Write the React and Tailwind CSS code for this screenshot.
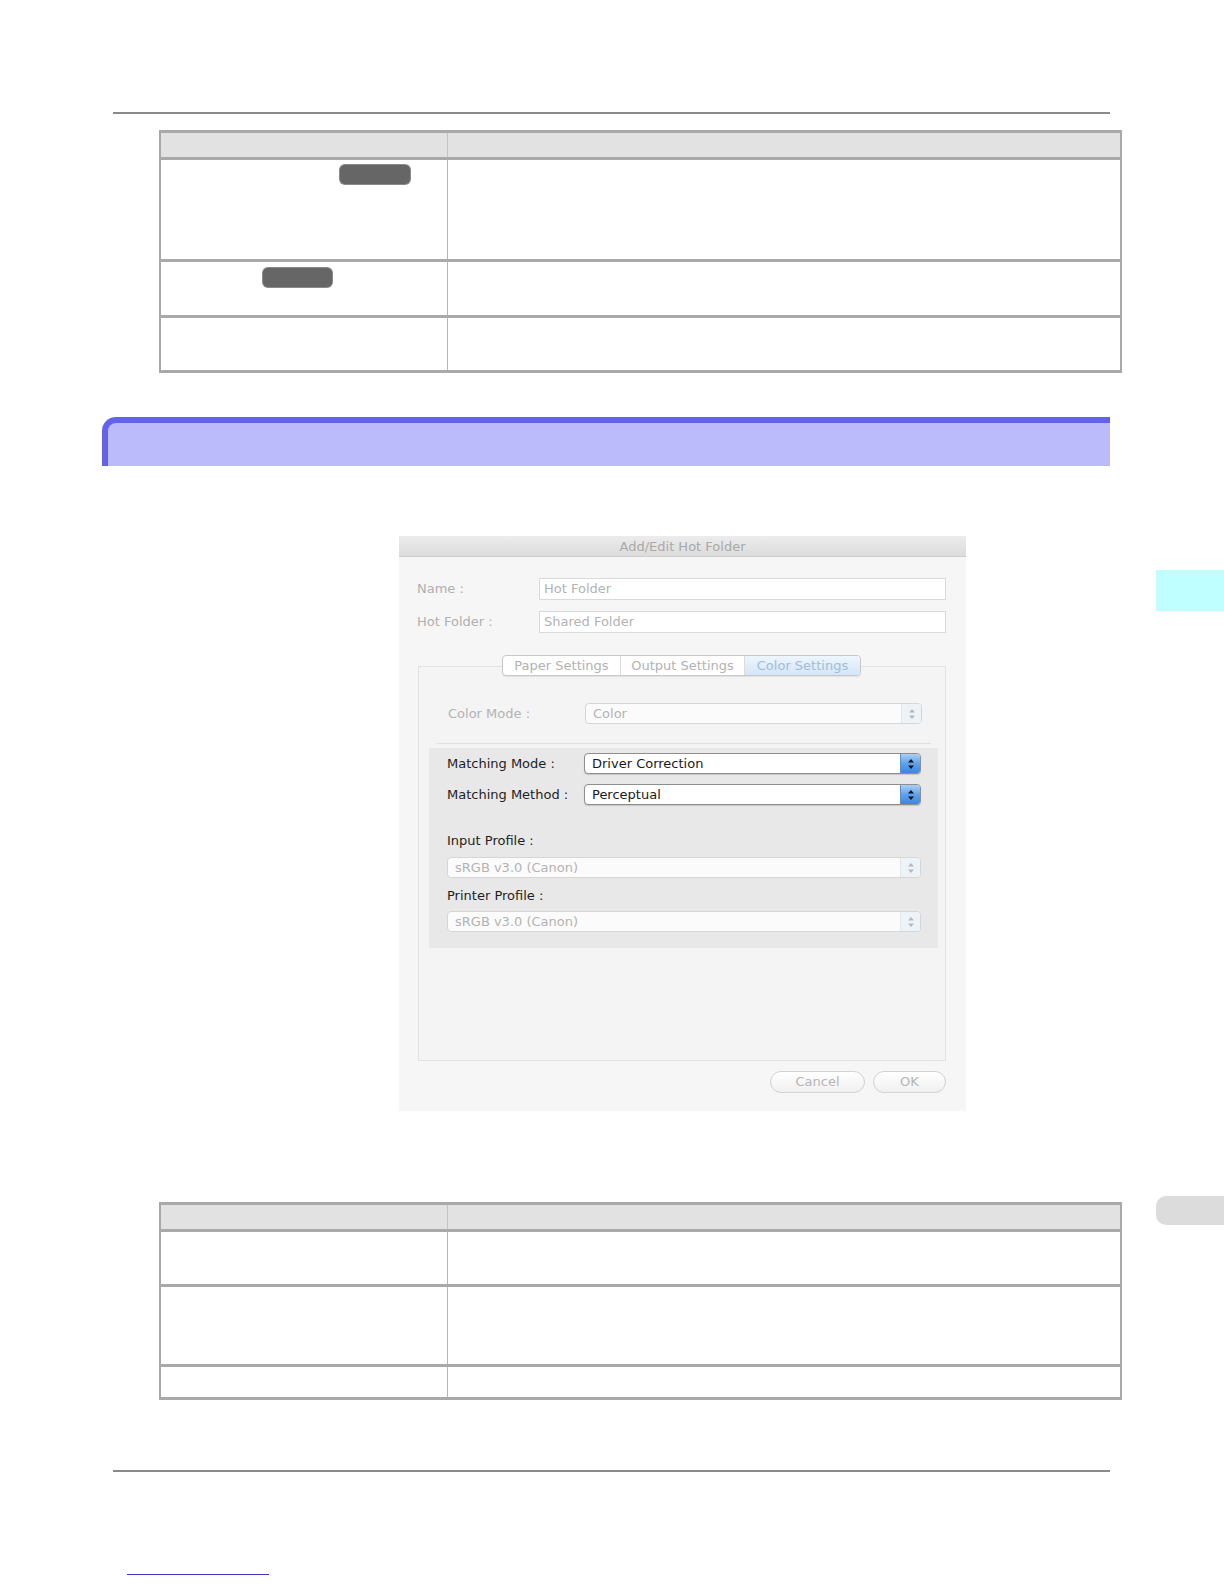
import React from "react";

const Arrows = ({ on }) => (
  <svg width="8" height="12" viewBox="0 0 8 12">
    <path d="M4 1 L7 4.5 L1 4.5 Z" fill={on ? "#111" : "#b4b9c0"} />
    <path d="M4 11 L7 7.5 L1 7.5 Z" fill={on ? "#111" : "#b4b9c0"} />
  </svg>
);

const Popup = ({ value, on, className = "" }) => (
  <div
    className={
      "flex h-[21px] items-stretch rounded-[4px] border " +
      (on ? "border-[#8e8e8e] bg-white shadow-[0_1px_1px_rgba(0,0,0,0.15)]" : "border-[#d6d6d6] bg-[#fbfbfb]") +
      " " +
      className
    }
  >
    <div className={"flex-1 pl-[7px] leading-[19px] " + (on ? "text-[#1a1a1a]" : "text-[#b3b3b3]")}>{value}</div>
    <div
      className={
        "flex w-[20px] items-center justify-center rounded-r-[3px] border-l " +
        (on
          ? "border-[#5b8fd0] bg-gradient-to-b from-[#a9d0f7] via-[#5ea2ec] to-[#3b86e0]"
          : "border-[#dfe6ee] bg-[#eef3f8]")
      }
    >
      <Arrows on={on} />
    </div>
  </div>
);

const Row = ({ h, last, children }) => (
  <div
    className={
      "flex border-t-[3px] border-[#a9a9a9] " + (last ? "border-b-[3px]" : "")
    }
    style={{ height: h }}
  >
    <div className="w-[287px] border-r border-[#b5b5b5]">{children}</div>
    <div className="flex-1" />
  </div>
);

const Header = () => (
  <div className="flex h-[27px] border-t-[3px] border-[#a9a9a9] bg-[#e2e2e2]">
    <div className="w-[287px] border-r border-[#c4c4c4]" />
    <div className="flex-1" />
  </div>
);

const Badge = ({ w, ml, mt }) => (
  <div
    className="h-[19px] rounded-[5px] bg-[#666666] shadow-[0_0_0_1px_#8a8a8a]"
    style={{ width: w, marginLeft: ml, marginTop: mt }}
  />
);

export default function App() {
  return (
    <div className="relative h-[1584px] w-[1224px] overflow-hidden bg-white font-['DejaVu_Sans',sans-serif]">
      <div className="pl-[113px] pt-[112px]">
        <div className="h-[2px] w-[997px] bg-[#8a8a8a]" />

        {/* table 1 */}
        <div className="ml-[46px] mt-[16px] w-[963px] border-x-2 border-[#a9a9a9]">
          <Header />
          <Row h={102}>
            <Badge w={70} ml={179} mt={5} />
          </Row>
          <Row h={56}>
            <Badge w={69} ml={102} mt={6} />
          </Row>
          <Row h={58} last />
        </div>

        {/* section heading */}
        <div className="-ml-[11px] mt-[44px] h-[49px] w-[1008px] rounded-tl-[14px] border-l-[6px] border-t-[6px] border-[#6363e9] bg-[#bbbbfc]" />

        {/* dialog */}
        <div className="ml-[286px] mt-[70px] flex h-[575px] w-[567px] flex-col bg-[#f6f6f6] text-[13px]">
          <div className="h-[21px] border-b border-[#cfcfcf] bg-gradient-to-b from-[#ececec] to-[#dcdcdc] text-center leading-[21px] text-[#a9a9a9]">
            Add/Edit Hot Folder
          </div>

          <div className="mt-[21px] flex h-[22px] items-center">
            <div className="w-[140px] pl-[18px] text-[#b0b0b0]">Name :</div>
            <div className="h-[22px] w-[407px] border border-[#dadada] bg-white pl-[4px] leading-[20px] text-[#b3b3b3]">
              Hot Folder
            </div>
          </div>
          <div className="mt-[11px] flex h-[22px] items-center">
            <div className="w-[140px] pl-[18px] text-[#b0b0b0]">Hot Folder :</div>
            <div className="h-[22px] w-[407px] border border-[#dadada] bg-white pl-[4px] leading-[20px] text-[#b3b3b3]">
              Shared Folder
            </div>
          </div>

          {/* tabs */}
          <div className="relative z-10 ml-[103px] mt-[22px] flex h-[21px] w-[359px] overflow-hidden rounded-[4px] border border-[#c9c9c9] bg-white text-[#b2b2b2] shadow-[0_1px_1px_rgba(0,0,0,0.08)]">
            <div className="w-[118px] border-r border-[#dcdcdc] text-center leading-[19px]">Paper Settings</div>
            <div className="w-[124px] border-r border-[#dcdcdc] text-center leading-[19px]">Output Settings</div>
            <div className="flex-1 bg-gradient-to-b from-[#eef6fd] to-[#d3e6f8] text-center leading-[19px] text-[#a3bdd6]">
              Color Settings
            </div>
          </div>

          <div className="-mt-[10px] ml-[19px] h-[395px] w-[528px] border border-[#e3e3e3] bg-[#f4f4f4]">
            <div className="mt-[36px] flex items-center">
              <div className="w-[166px] pl-[29px] text-[#b3b3b3]">Color Mode :</div>
              <Popup value="Color" className="w-[337px]" />
            </div>
            <div className="ml-[17px] mt-[19px] h-px w-[495px] bg-[#e0e0e0]" />
            <div className="ml-[10px] mt-[4px] h-[200px] w-[509px] bg-[#e8e8e8] pt-[5px]">
              <div className="flex items-center">
                <div className="w-[155px] pl-[18px] text-[#1e1e1e]">Matching Mode :</div>
                <Popup value="Driver Correction" on className="w-[337px]" />
              </div>
              <div className="mt-[10px] flex items-center">
                <div className="w-[155px] pl-[18px] text-[#1e1e1e]">Matching Method :</div>
                <Popup value="Perceptual" on className="w-[337px]" />
              </div>
              <div className="ml-[18px] mt-[27px] h-[17px] leading-[17px] text-[#1e1e1e]">Input Profile :</div>
              <Popup value="sRGB v3.0 (Canon)" className="ml-[18px] mt-[8px] w-[474px]" />
              <div className="ml-[18px] mt-[9px] h-[17px] leading-[17px] text-[#1e1e1e]">Printer Profile :</div>
              <Popup value="sRGB v3.0 (Canon)" className="ml-[18px] mt-[7px] w-[474px]" />
            </div>
          </div>

          <div className="mr-[20px] mt-[10px] flex justify-end gap-[8px]">
            <div className="h-[22px] w-[95px] rounded-full border border-[#d2d2d2] bg-gradient-to-b from-[#ffffff] to-[#f0f0f0] text-center leading-[20px] text-[#b5b5b5]">
              Cancel
            </div>
            <div className="h-[22px] w-[73px] rounded-full border border-[#d2d2d2] bg-gradient-to-b from-[#ffffff] to-[#f0f0f0] text-center leading-[20px] text-[#b5b5b5]">
              OK
            </div>
          </div>
        </div>

        {/* table 2 */}
        <div className="ml-[46px] mt-[91px] w-[963px] border-x-2 border-[#a9a9a9]">
          <Header />
          <Row h={55} />
          <Row h={80} />
          <Row h={36} last />
        </div>

        <div className="mt-[70px] h-[2px] w-[997px] bg-[#8a8a8a]" />
        <div className="ml-[14px] mt-[102px] h-px w-[142px] bg-[#3636c8]" />
      </div>

      {/* page edge thumb tabs */}
      <div className="absolute left-[1156px] top-[570px] h-[41px] w-[68px] bg-[#bfffff]" />
      <div className="absolute left-[1156px] top-[1196px] h-[29px] w-[68px] rounded-l-[10px] bg-[#dcdcdc]" />
    </div>
  );
}
